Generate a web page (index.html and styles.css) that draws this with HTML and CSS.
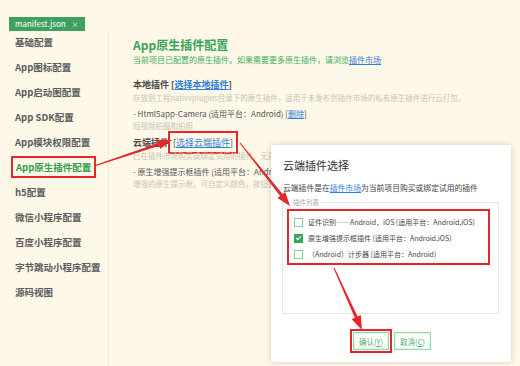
FILE: index.html
```html
<!DOCTYPE html>
<html lang="zh-CN">
<head>
  <meta charset="UTF-8">
  <title>manifest.json</title>
  <link rel="stylesheet" href="styles.css">
</head>
<body>
  <div class="page">
    <div class="tabs">
      <span class="tab">manifest.json <span class="tab-close">×</span></span>
    </div>
    <div class="layout">
      <ul class="menu">
        <li class="menu-item">基础配置</li>
        <li class="menu-item">App图标配置</li>
        <li class="menu-item">App启动图配置</li>
        <li class="menu-item">App SDK配置</li>
        <li class="menu-item">App模块权限配置</li>
        <li class="menu-item active"><span class="mark">App原生插件配置</span></li>
        <li class="menu-item">h5配置</li>
        <li class="menu-item">微信小程序配置</li>
        <li class="menu-item">百度小程序配置</li>
        <li class="menu-item">字节跳动小程序配置</li>
        <li class="menu-item">源码视图</li>
      </ul>

      <main class="content">
        <h1 class="title">App原生插件配置</h1>
        <p class="subtitle">当前项目已配置的原生插件。如果需要更多原生插件，请浏览<a class="link" href="#">插件市场</a></p>

        <section class="block">
          <div class="block-head">本地插件 [<a class="link" href="#">选择本地插件</a>]</div>
          <div class="hint">存放到工程nativeplugins目录下的原生插件，适用于未发布到插件市场的私有原生插件进行云打包。</div>
          <div class="plugin">- Html5app-Camera (适用平台：Android) [<a class="link" href="#">删除</a>]</div>
          <div class="hint">短视频拍摄和拍照</div>
        </section>

        <section class="block cloud">
          <div class="block-head">云端插件 <span class="mark">[<a class="link" href="#">选择云端插件</a>]</span></div>
          <div class="hint clip">已在插件市场购买或绑定试用的插件。无需下载到本地</div>
          <div class="plugin clip">- 原生增强提示框插件 (适用平台：Android,iOS)</div>
          <div class="hint clip">增强的原生提示框，可自定义颜色，按钮数量</div>
        </section>
      </main>
    </div>

    <div class="dialog">
      <div class="dialog-title">云端插件选择</div>
      <div class="dialog-text">云端插件是在<a class="link" href="#">插件市场</a>为当前项目购买或绑定试用的插件</div>
      <fieldset class="list">
        <legend>插件列表</legend>
        <div class="list-mark">
          <label class="option"><span class="check"></span>证件识别——Android，iOS (适用平台：Android,iOS)</label>
          <label class="option"><span class="check on"></span>原生增强提示框插件 (适用平台：Android,iOS)</label>
          <label class="option"><span class="check"></span>（Android）计步器 (适用平台：Android)</label>
        </div>
      </fieldset>
      <div class="buttons">
        <span class="mark btn-mark"><button class="btn">确认(<u>Y</u>)</button></span>
        <button class="btn">取消(<u>C</u>)</button>
      </div>
    </div>

    <!-- annotation arrows -->
    <svg class="arrows" width="520" height="366" viewBox="0 0 520 366">
      <polygon points="93.8,165.5 158.2,143 157.1,139.7 172,140 160.3,149.1 159.2,145.8 94.2,166.5"/>
      <polygon points="240.4,142.7 282.5,194.1 285.2,191.9 290,206 277.4,198.1 280.1,195.9 239.6,143.3"/>
      <polygon points="334.5,267.8 357.6,316.6 360.8,315.1 362,330 351.6,319.3 354.8,317.8 333.5,268.2"/>
    </svg>
  </div>
</body>
</html>
```

FILE: styles.css
```css
/* Reset */
html, body {
  margin: 0;
  padding: 0;
}

body {
  font-family: "Noto Sans CJK SC", sans-serif;
  background-color: #fdf8e7;
  color: #444;
}

.page {
  position: relative;
  width: 520px;
  height: 366px;
  overflow: hidden;
}

/* Top tab bar */
.tabs {
  height: 30px;
  padding: 8px 0 0 9px;
  box-sizing: border-box;
}

.tab {
  display: inline-block;
  height: 14px;
  line-height: 14px;
  padding: 0 6px;
  font-size: 8px;
  color: #fff;
  background-color: #3f9f5e;
}

.tab-close {
  margin-left: 4px;
  font-size: 7px;
}

.layout {
  display: flex;
  height: 336px;
}

/* Left menu */
.menu {
  list-style: none;
  margin: 0;
  padding: 0 0 0 15px;
  width: 93px;
  border-right: 1px solid #f1ebd9;
}

.menu-item {
  height: 25px;
  line-height: 25px;
  font-size: 9.5px;
  font-weight: bold;
  color: #5c5c5c;
  white-space: nowrap;
}

.menu-item.active {
  color: #2f9e50;
}

.menu-item.active .mark {
  margin-left: -4px;
  padding: 2px 3px;
}

/* red highlight box used by the annotations */
.mark {
  border: 2px solid #e5262b;
}

/* Right content */
.content {
  flex: 1;
  padding: 7px 0 0 24px;
  white-space: nowrap;
}

.title {
  margin: 0;
  font-size: 12px;
  line-height: 16px;
  color: #38a459;
}

.subtitle {
  margin: 1px 0 0;
  font-size: 8px;
  line-height: 12px;
  color: #40ad62;
}

.link {
  color: #2f7fd8;
  text-decoration: underline;
}

.block {
  margin-top: 12px;
}

.block.cloud {
  margin-top: 5px;
}

.block-head {
  font-size: 9px;
  line-height: 14px;
  font-weight: bold;
  color: #484848;
}

.block-head .mark {
  padding: 3px 3px;
  margin-left: -3px;
  font-weight: normal;
}

.hint {
  font-size: 7.5px;
  line-height: 11px;
  color: #c9c4b4;
}

.plugin {
  margin-top: 5px;
  font-size: 8px;
  line-height: 12px;
  color: #555;
}

/* lines that run under the dialog are cut at its edge */
.clip {
  width: 138px;
  overflow: hidden;
}

/* Dialog */
.dialog {
  position: absolute;
  left: 271px;
  top: 145px;
  width: 240px;
  height: 217px;
  padding: 12px 12px 0 11px;
  box-sizing: border-box;
  background-color: #fff;
  box-shadow: 0 0 6px rgba(0, 0, 0, 0.18);
  white-space: nowrap;
}

.dialog-title {
  font-size: 11px;
  line-height: 16px;
  color: #333;
  padding-left: 1px;
}

.dialog-text {
  margin-top: 9px;
  padding-left: 1px;
  font-size: 7.8px;
  line-height: 12px;
  color: #444;
}

.list {
  margin: 4px 0 0;
  padding: 3px 8px 0 4px;
  height: 116px;
  box-sizing: border-box;
  border: 1px solid #e3e3e3;
}

.list legend {
  margin-left: 4px;
  padding: 0 2px;
  font-size: 6.5px;
  line-height: 8px;
  color: #aaa;
}

.list-mark {
  border: 2px solid #e5262b;
  padding: 3px 0 0 5px;
  height: 49px;
}

.option {
  display: flex;
  align-items: center;
  height: 16px;
  font-size: 7px;
  color: #444;
}

.check {
  width: 7px;
  height: 7px;
  margin-right: 5px;
  border: 1px solid #84cf97;
  background-color: #fff;
}

.check.on {
  position: relative;
  background-color: #3ba35b;
  border-color: #3ba35b;
}

.check.on::after {
  content: "";
  position: absolute;
  left: 2px;
  top: 0;
  width: 2px;
  height: 4px;
  border: solid #fff;
  border-width: 0 1.5px 1.5px 0;
  transform: rotate(45deg);
}

.buttons {
  display: flex;
  justify-content: center;
  align-items: center;
  gap: 2px;
  margin-top: 15px;
}

.btn-mark {
  display: inline-flex;
  padding: 1px 1px;
}

.btn {
  height: 18px;
  padding: 0 5px;
  font-family: inherit;
  font-size: 7.5px;
  color: #4aae67;
  background-color: #fff;
  border: 1px solid #8fdca4;
  box-shadow: inset 0 0 0 1px #e4f6e8;
}

.btn u {
  text-decoration: underline;
}

/* Annotation overlay */
.arrows {
  position: absolute;
  left: 0;
  top: 0;
  pointer-events: none;
}

.arrows polygon {
  fill: #e5262b;
}
```
